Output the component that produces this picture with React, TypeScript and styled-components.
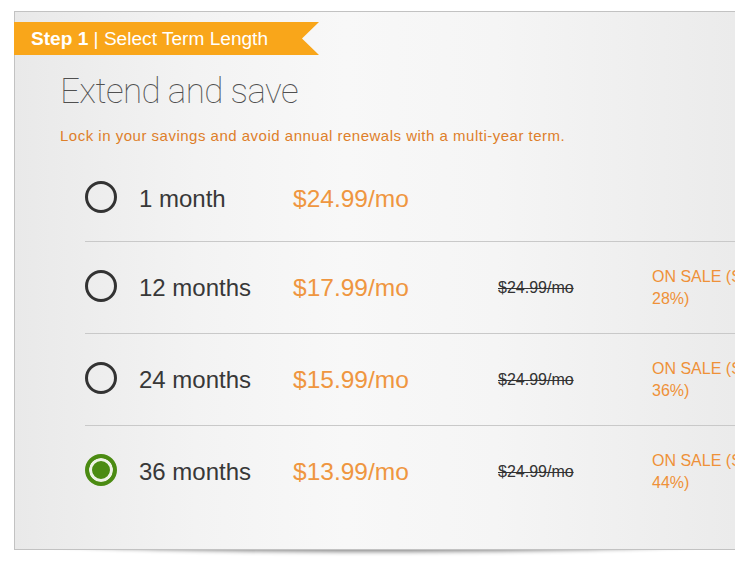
import React from "react";
import styled, { createGlobalStyle } from "styled-components";

const Global = createGlobalStyle`
  html, body {
    margin: 0;
    padding: 0;
    background: #ffffff;
    overflow: hidden;
    width: 735px;
    height: 561px;
  }
  body {
    font-family: "Liberation Sans", Arial, sans-serif;
  }
`;

const Stage = styled.div`
  padding: 11px 0 0 14px;
`;

const PanelWrap = styled.div`
  position: relative;
  width: 780px;

  &::after {
    content: "";
    position: absolute;
    left: 20px;
    right: 80px;
    bottom: 3px;
    height: 10px;
    border-radius: 0 0 50% 50% / 0 0 100% 100%;
    background: rgba(0, 0, 0, 0.2);
    box-shadow: 0 5px 4px rgba(0, 0, 0, 0.45);
    z-index: 0;
  }
`;

const Panel = styled.section`
  position: relative;
  z-index: 1;
  box-sizing: border-box;
  height: 539px;
  border: 1px solid #c2c2c2;
  border-right: none;
  background: linear-gradient(
    90deg,
    #e9e9e9 0px,
    #f3f3f3 180px,
    #f8f8f8 330px,
    #f5f5f5 480px,
    #ebebeb 720px
  );
  padding-top: 10px;
`;

const Ribbon = styled.div`
  box-sizing: border-box;
  margin-left: -1px;
  width: 305px;
  height: 33px;
  line-height: 33px;
  padding-left: 17px;
  background: #f9a61a;
  color: #ffffff;
  font-size: 19.1px;
  white-space: nowrap;
  clip-path: polygon(0 0, 100% 0, calc(100% - 17px) 50%, 100% 100%, 0 100%);
`;

const StepLabel = styled.strong`
  font-weight: 700;
`;

const Content = styled.div`
  padding-left: 45px;
`;

const Title = styled.h1`
  margin: 17px 0 0;
  font-family: Roboto, "Liberation Sans", sans-serif;
  font-weight: 100;
  font-size: 35px;
  line-height: 40px;
  color: #505050;
  letter-spacing: -0.6px;
`;

const Lead = styled.p`
  margin: 15px 0 0;
  font-size: 15px;
  line-height: 18px;
  letter-spacing: 0.5px;
  color: #de7f2a;
`;

const Options = styled.div`
  margin: 11px 0 0 25px;
`;

const Row = styled.label<{ first?: boolean; last?: boolean }>`
  box-sizing: border-box;
  height: ${(p) => (p.first ? "86px" : "92px")};
  display: grid;
  grid-template-columns: 54px 154px 205px 154px 130px;
  align-items: center;
  border-bottom: 1px solid ${(p) => (p.last ? "transparent" : "#c9c9c9")};
`;

const Radio = styled.span<{ checked?: boolean }>`
  box-sizing: border-box;
  width: 32px;
  height: 32px;
  border-radius: 50%;
  border: ${(p) => (p.checked ? "4px solid #4b8b12" : "3.5px solid #333333")};
  background: ${(p) => (p.checked ? "#4b8b12" : "transparent")};
  box-shadow: ${(p) => (p.checked ? "inset 0 0 0 3px #eef2e6" : "none")};
  margin-top: -3px;
`;

const Term = styled.span`
  font-size: 24px;
  color: #383838;
`;

const Price = styled.span`
  font-size: 24.5px;
  color: #ef9640;
`;

const OldPrice = styled.span`
  font-size: 16px;
  color: #333333;
  text-decoration: line-through;
`;

const Sale = styled.span`
  font-size: 16px;
  line-height: 22px;
  color: #ef9138;
`;

const options = [
  { term: "1 month", price: "$24.99/mo" },
  { term: "12 months", price: "$17.99/mo", save: "28%" },
  { term: "24 months", price: "$15.99/mo", save: "36%" },
  { term: "36 months", price: "$13.99/mo", save: "44%", checked: true },
];

export default function App() {
  return (
    <>
      <Global />
      <Stage>
        <PanelWrap>
          <Panel>
            <Ribbon>
              <StepLabel>Step 1</StepLabel> | Select Term Length
            </Ribbon>
            <Content>
              <Title>Extend and save</Title>
              <Lead>Lock in your savings and avoid annual renewals with a multi-year term.</Lead>
              <Options>
                {options.map((o, i) => (
                  <Row key={o.term} first={i === 0} last={i === options.length - 1}>
                    <Radio checked={o.checked} />
                    <Term>{o.term}</Term>
                    <Price>{o.price}</Price>
                    {o.save ? <OldPrice>$24.99/mo</OldPrice> : <span />}
                    {o.save ? <Sale>ON SALE (Save {o.save})</Sale> : <span />}
                  </Row>
                ))}
              </Options>
            </Content>
          </Panel>
        </PanelWrap>
      </Stage>
    </>
  );
}
